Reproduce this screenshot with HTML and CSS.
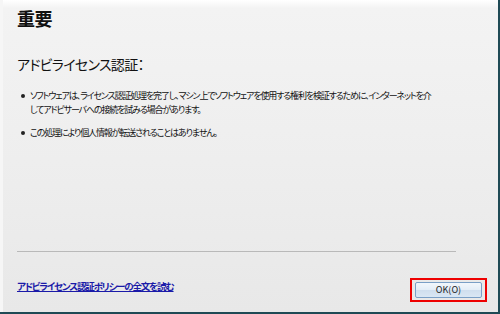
FILE: index.html
```html
<!DOCTYPE html>
<html lang="ja">
<head>
<meta charset="utf-8">
<link rel="stylesheet" href="styles.css">
</head>
<body>
<div class="dialog">
  <div class="content">
    <h1 class="title">重要</h1>
    <h2 class="heading">アドビライセンス認証：</h2>
    <ul class="list">
      <li class="item">ソフトウェアは、ライセンス認証処理を完了し、マシン上でソフトウェアを使用する権利を検証するために、インターネットを介<br>してアドビサーバへの接続を試みる場合があります。</li>
      <li class="item">この処理により個人情報が転送されることはありません。</li>
    </ul>
  </div>
  <div class="footer">
    <hr class="sep">
    <div class="actions">
      <a class="link" href="#">アドビライセンス認証ポリシーの全文を読む</a>
      <div class="highlight"><button class="btn">OK(O)</button></div>
    </div>
  </div>
</div>
</body>
</html>
```
FILE: styles.css
```css
html, body {
  margin: 0;
  padding: 0;
  width: 500px;
  height: 314px;
  overflow: hidden;
  background: #1f4a55;
}
.dialog {
  box-sizing: border-box;
  width: 498px;
  height: 312px;
  background: linear-gradient(180deg, #ffffff 0px, #f3f3f3 8px, #eeeeee 160px, #e8e8e8 312px);
  border-left: 3px solid #f6f6f6;
  display: flex;
  flex-direction: column;
  font-family: "Noto Sans CJK JP", "Noto Sans", sans-serif;
  font-feature-settings: "palt";
  color: #111;
}
.content {
  flex: 1;
  padding: 5px 0 0 14px;
}
.title {
  margin: 0;
  font-size: 18px;
  font-weight: bold;
  line-height: 26px;
  letter-spacing: -0.5px;
}
.heading {
  margin: 23px 0 0 0;
  font-size: 14px;
  font-weight: normal;
  line-height: 20px;
  letter-spacing: -0.7px;
}
.list {
  margin: 15px 0 0 0;
  padding: 0 0 0 13px;
  list-style: none;
}
.item {
  position: relative;
  font-size: 9px;
  line-height: 14px;
  letter-spacing: -1.15px;
  margin-bottom: 9px;
}
.item::before {
  content: "";
  position: absolute;
  left: -9px;
  top: 5px;
  width: 4px;
  height: 4px;
  border-radius: 50%;
  background: #222;
}
.footer {
  padding: 0 11px 10px 14px;
}
.sep {
  margin: 0 31px 0 0;
  border: 0;
  border-top: 1px solid #b9b9b9;
  height: 0;
}
.actions {
  display: flex;
  justify-content: space-between;
  align-items: center;
  margin-top: 26px;
}
.link {
  font-size: 9.5px;
  font-weight: bold;
  color: #1a1aa8;
  text-decoration: underline;
  letter-spacing: -1.2px;
  line-height: 12px;
  margin-bottom: 8px;
}
.highlight {
  border: 2px solid #ee0000;
  padding: 2px 3px;
  display: flex;
}
.btn {
  width: 67px;
  height: 16px;
  border: 1px solid #7a9fc6;
  border-radius: 2px;
  background: linear-gradient(180deg, #f2f7fc 0%, #e3edf7 50%, #cfdeee 51%, #d9e7f4 100%);
  font-family: "Noto Sans CJK JP", "Noto Sans", sans-serif;
  font-size: 9px;
  color: #222;
  padding: 0;
  line-height: 14px;
}
```
